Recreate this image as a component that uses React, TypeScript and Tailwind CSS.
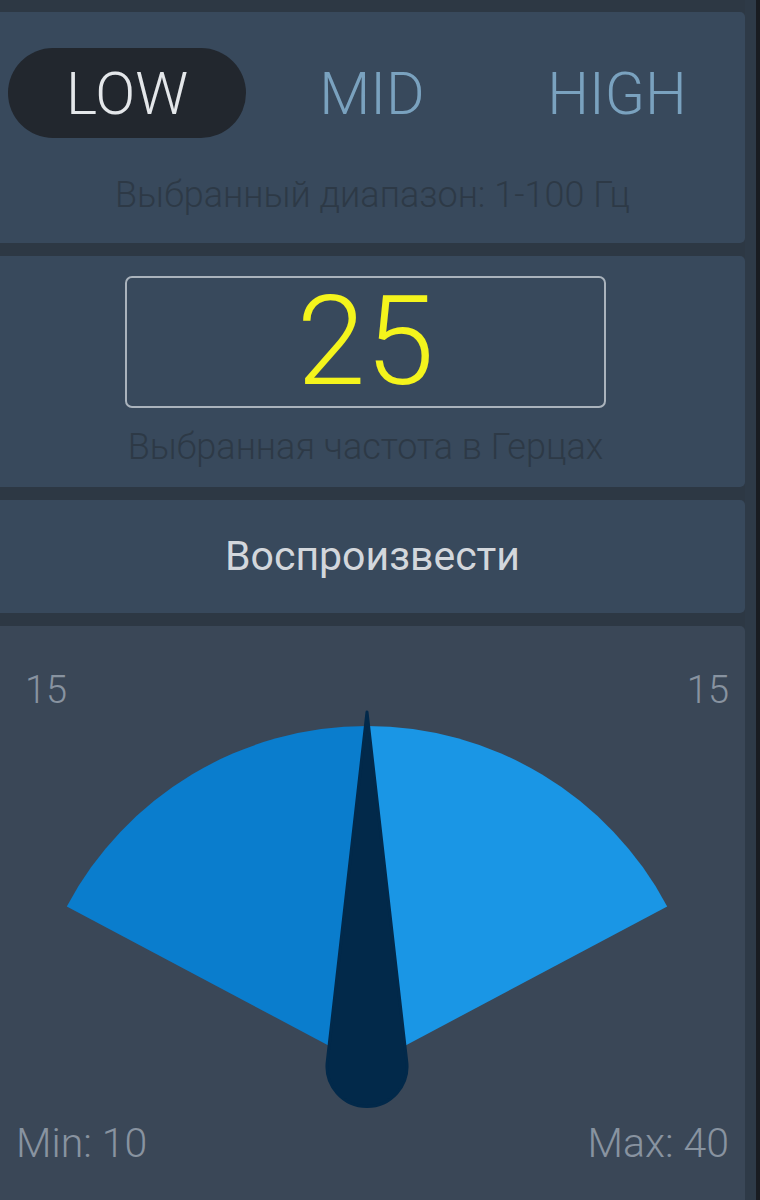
import React from "react"

const font = { fontFamily: "Roboto, 'Liberation Sans', sans-serif" }

function RangeTabs() {
  const tabs = ["LOW", "MID", "HIGH"]
  return (
    <div className="flex gap-[7px] pl-[8px]">
      {tabs.map((t, i) => (
        <div
          key={t}
          className={
            i === 0
              ? "flex h-[90px] w-[238px] items-center justify-center rounded-full bg-[#22272e] text-[59px] font-light leading-none text-[#e4e7ea]"
              : "flex h-[90px] w-[238px] items-center justify-center text-[59px] font-light leading-none text-[#7aa2bf]"
          }
        >
          {t}
        </div>
      ))}
    </div>
  )
}

function Gauge() {
  // center of the dial, radius of the blue sector
  const cx = 367
  const cy = 356
  const r = 340
  const a = (62 * Math.PI) / 180
  const lx = cx - r * Math.sin(a)
  const rx = cx + r * Math.sin(a)
  const ey = cy - r * Math.cos(a)
  return (
    <svg width="745" height="400" viewBox="0 0 745 400" className="block">
      <path d={`M ${cx} ${cy} L ${lx} ${ey} A ${r} ${r} 0 0 1 ${cx} ${cy - r} Z`} fill="#0a7dcd" />
      <path d={`M ${cx} ${cy} L ${cx} ${cy - r} A ${r} ${r} 0 0 1 ${rx} ${ey} Z`} fill="#1a96e5" />
      <path
        d={`M ${cx} 2 L ${cx + 39.7} ${cy - 4.5} A 40 40 0 1 1 ${cx - 39.7} ${cy - 4.5} Z`}
        fill="#02294a"
        stroke="#02294a"
        strokeWidth="3"
        strokeLinejoin="round"
      />
    </svg>
  )
}

export default function App() {
  return (
    <div className="flex h-[1200px] w-[760px] overflow-hidden bg-[#2d3844]" style={font}>
      <div className="flex w-[745px] flex-col gap-[13px] pt-[12px]">
        {/* Range selector */}
        <div className="h-[231px] shrink-0 rounded-r-[5px] bg-[#38495c] pt-[36px]">
          <RangeTabs />
          <p className="mt-[37px] text-center text-[36px] font-light leading-[40px] text-[#2d3946]">
            Выбранный диапазон: 1-100 Гц
          </p>
        </div>

        {/* Frequency */}
        <div className="flex h-[231px] shrink-0 flex-col items-center rounded-r-[5px] bg-[#38495c] pr-[14px] pt-[20px]">
          <div className="flex h-[132px] w-[481px] items-center justify-center rounded-[7px] border-2 border-[#aab3bc]">
            <span className="text-[124px] font-light leading-none text-[#f4f41c]">25</span>
          </div>
          <p className="mt-[19px] text-[36px] font-light leading-[40px] text-[#2d3946]">
            Выбранная частота в Герцах
          </p>
        </div>

        {/* Play */}
        <div className="flex h-[113px] shrink-0 items-center justify-center rounded-r-[5px] bg-[#38495c] text-[41px] leading-none text-[#d3d7dc]">
          Воспроизвести
        </div>

        {/* Dial */}
        <div className="flex-1 rounded-tr-[5px] bg-[#3a4757] pt-[44px]">
          <div className="flex justify-between px-[16px] text-[38px] font-light leading-[40px] text-[#8893a0]">
            <span className="pl-[9px]">15</span>
            <span>15</span>
          </div>
          <Gauge />
          <div className="mt-[13px] flex justify-between px-[16px] text-[41px] font-light leading-[40px] text-[#8893a0]">
            <span>Min: 10</span>
            <span>Max: 40</span>
          </div>
        </div>
      </div>
      <div className="w-[11px] bg-[#2e3a47]" />
      <div className="w-[4px] bg-[#191c21]" />
    </div>
  )
}
